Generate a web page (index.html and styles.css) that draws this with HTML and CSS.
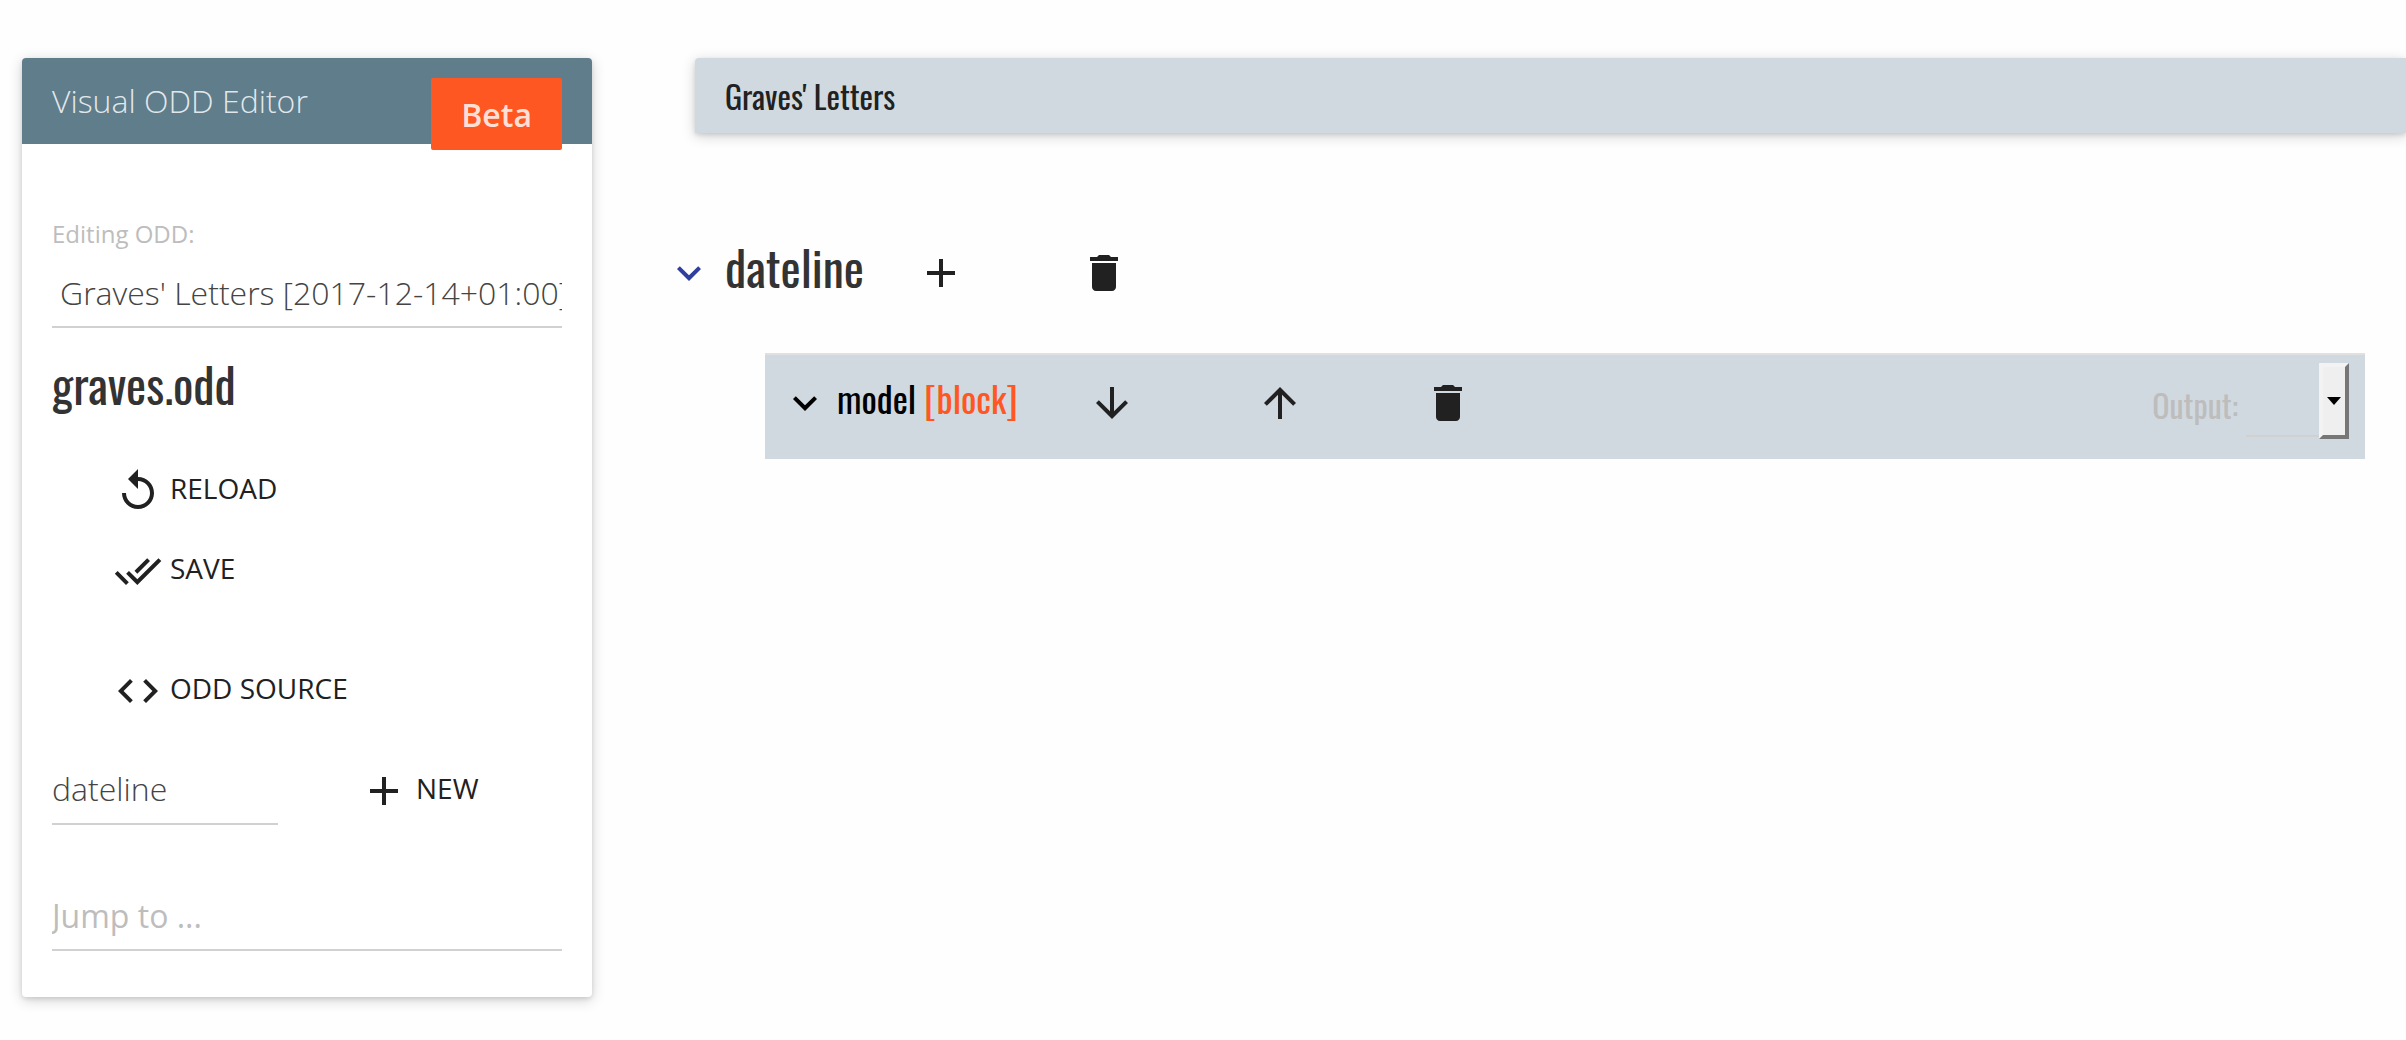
FILE: index.html
```html
<!DOCTYPE html>
<html lang="en">
<head>
<meta charset="utf-8">
<title>Visual ODD Editor</title>
<link rel="stylesheet" href="styles.css">
</head>
<body>
<svg class="sprite" aria-hidden="true">
  <symbol id="replay" viewBox="0 0 24 24"><path d="M12 5V1L7 6l5 5V7c3.31 0 6 2.69 6 6s-2.69 6-6 6-6-2.69-6-6H4c0 4.42 3.58 8 8 8s8-3.58 8-8-3.58-8-8-8z"/></symbol>
  <symbol id="done-all" viewBox="0 0 24 24"><path d="M18 7l-1.41-1.41-6.34 6.34 1.41 1.41L18 7zm4.24-1.41L11.66 16.17 7.48 12l-1.41 1.41L11.66 19l12-12-1.42-1.41zM.41 13.41L6 19l1.41-1.41L1.83 12 .41 13.41z"/></symbol>
  <symbol id="code" viewBox="0 0 24 24"><path d="M9.4 16.6L4.8 12l4.6-4.6L8 6l-6 6 6 6 1.4-1.4zm5.2 0l4.6-4.6-4.6-4.6L16 6l6 6-6 6-1.4-1.4z"/></symbol>
  <symbol id="add" viewBox="0 0 24 24"><path d="M19 13h-6v6h-2v-6H5v-2h6V5h2v6h6v2z"/></symbol>
  <symbol id="delete" viewBox="0 0 24 24"><path d="M6 19c0 1.1.9 2 2 2h8c1.100 0 2-.9 2-2V7H6v12zM19 4h-3.500l-1-1h-5l-1 1H5v2h14V4z"/></symbol>
  <symbol id="expand" viewBox="0 0 24 24"><path d="M16.590 8.590L12 13.170 7.410 8.590 6 10l6 6 6-6z"/></symbol>
  <symbol id="down" viewBox="0 0 24 24"><path d="M20 12l-1.410-1.410L13 16.170V4h-2v12.170l-5.580-5.590L4 12l8 8 8-8z"/></symbol>
  <symbol id="up" viewBox="0 0 24 24"><path d="M4 12l1.410 1.410L11 7.830V20h2V7.830l5.580 5.590L20 12l-8-8-8 8z"/></symbol>
</svg>

<aside class="panel">
  <header class="panel-header">
    <h1 class="panel-title">Visual ODD Editor</h1>
    <span class="badge">Beta</span>
  </header>
  <div class="panel-body">
    <label class="field-label" for="odd">Editing ODD:</label>
    <input class="field field-odd" id="odd" type="text" value="Graves' Letters [2017-12-14+01:00]">
    <h2 class="file-name">graves.odd</h2>
    <div class="actions">
      <button class="action" type="button"><svg class="icon"><use href="#replay"/></svg><span class="action-text">RELOAD</span></button>
      <button class="action" type="button"><svg class="icon"><use href="#done-all"/></svg><span class="action-text">SAVE</span></button>
      <button class="action action-source" type="button"><svg class="icon"><use href="#code"/></svg><span class="action-text">ODD SOURCE</span></button>
    </div>
    <div class="new-row">
      <input class="field field-ident" type="text" value="dateline" aria-label="Element name">
      <button class="action" type="button"><svg class="icon"><use href="#add"/></svg><span class="action-text">NEW</span></button>
    </div>
    <input class="field field-jump" type="text" placeholder="Jump to ..." aria-label="Jump to">
  </div>
</aside>

<main class="editor">
  <header class="title-bar">Graves' Letters</header>
  <section>
    <div class="element-row">
      <button class="icon-button toggle" type="button" aria-label="Collapse dateline"><svg class="icon"><use href="#expand"/></svg></button>
      <h2 class="element-name">dateline</h2>
      <div class="element-tools">
        <button class="icon-button" type="button" aria-label="Add model"><svg class="icon"><use href="#add"/></svg></button>
        <button class="icon-button" type="button" aria-label="Delete dateline"><svg class="icon"><use href="#delete"/></svg></button>
      </div>
    </div>
    <div class="model">
      <div class="model-head">
        <button class="icon-button model-toggle" type="button" aria-label="Collapse model"><svg class="icon"><use href="#expand"/></svg></button>
        <h3 class="model-name">model <span class="behaviour">[block]</span></h3>
        <div class="model-tools">
          <button class="icon-button" type="button" aria-label="Move down"><svg class="icon"><use href="#down"/></svg></button>
          <button class="icon-button" type="button" aria-label="Move up"><svg class="icon"><use href="#up"/></svg></button>
          <button class="icon-button" type="button" aria-label="Delete model"><svg class="icon"><use href="#delete"/></svg></button>
        </div>
      </div>
      <div class="output">
        <label class="output-label" for="output">Output:</label>
        <input class="output-field" id="output" type="text">
        <button class="output-button" type="button" aria-label="Choose output"><svg class="caret" viewBox="0 0 14 8"><path d="M0 0h14L7 8z"/></svg></button>
      </div>
    </div>
  </section>
</main>
</body>
</html>
```
FILE: styles.css
```css
* {
  box-sizing: border-box;
}

:root {
  --body: "Open Sans", "Noto Sans", sans-serif;
  --heading: Oswald, "Liberation Sans Narrow", "Liberation Sans", sans-serif;
  --ink: #212121;
  --line: #d1d1d1;
  --muted: #bdbdbd;
  --bar: #d1d9e0;
  --accent: #ff5722;
  --shadow: 0 2px 4px rgba(0, 0, 0, .1), 0 3px 14px rgba(0, 0, 0, .18);
}

body {
  margin: 0;
  padding: 58px 0 40px 22px;
  display: flex;
  align-items: flex-start;
  gap: 103px;
  background: #fefefe;
  color: var(--ink);
  font-family: var(--body);
  overflow-x: hidden;
}

h1, h2, h3 {
  margin: 0;
  font-weight: 400;
}

button, input {
  font-family: inherit;
  color: inherit;
  margin: 0;
}

.sprite {
  position: absolute;
  width: 0;
  height: 0;
}

.icon {
  display: block;
  flex: none;
  width: 48px;
  height: 48px;
  fill: currentColor;
}

.panel {
  flex: 0 0 570px;
  background: #fff;
  border-radius: 4px;
  box-shadow: var(--shadow);
}

.panel-header {
  display: flex;
  justify-content: space-between;
  align-items: flex-start;
  height: 86px;
  padding: 20px 30px 0;
  background: #607d8b;
  border-radius: 4px 4px 0 0;
  color: rgba(255, 255, 255, .84);
}

.panel-title {
  font-size: 32px;
  font-weight: 300;
  line-height: 46px;
}

.badge {
  padding: 1px 30px 0;
  background: var(--accent);
  border-radius: 2px;
  font-size: 32px;
  font-weight: 600;
  line-height: 71px;
}

.panel-body {
  padding: 72px 30px 46px;
}

.field {
  display: block;
  width: 100%;
  height: 72px;
  padding: 0;
  border: 0;
  border-bottom: 2px solid var(--line);
  background: none;
  color: #444;
  font-size: 32px;
  font-weight: 300;
}

.field::placeholder {
  color: var(--muted);
  font-weight: 400;
  opacity: 1;
}

.field-label {
  display: block;
  color: var(--muted);
  font-size: 24px;
  line-height: 36px;
}

.field-odd {
  height: 76px;
  padding: 6px 0 0 8px;
}

.file-name {
  margin: 26px 0 53px;
  color: #333;
  font-family: var(--heading);
  font-size: 48px;
  line-height: 60px;
}

.actions {
  display: flex;
  flex-direction: column;
  align-items: flex-start;
  gap: 32px;
  margin: 0 0 39px 62px;
}

.action {
  display: flex;
  align-items: flex-start;
  gap: 8px;
  padding: 0;
  border: 0;
  background: none;
  font-size: 28px;
}

.action-text {
  line-height: 42px;
}

.action-source {
  margin-top: 40px;
}

.new-row {
  display: flex;
  align-items: flex-end;
  gap: 82px;
}

.new-row .action {
  margin-bottom: 10px;
}

.field-ident {
  width: 226px;
  height: 71px;
}

.field-jump {
  height: 70px;
  margin-top: 56px;
}

.editor {
  flex: 1;
  min-width: 0;
}

.title-bar {
  height: 75px;
  padding: 0 30px;
  background: var(--bar);
  border-radius: 4px 0 0 0;
  box-shadow: var(--shadow);
  font-family: var(--heading);
  font-size: 32px;
  line-height: 75px;
}

.icon-button {
  flex: none;
  padding: 0;
  border: 0;
  background: none;
}

.element-row {
  display: flex;
  align-items: center;
  gap: 12px;
  margin: 116px 0 56px -30px;
}

.toggle {
  color: #303f9f;
}

.element-name {
  width: 180px;
  padding-bottom: 12px;
  color: #333;
  font-family: var(--heading);
  font-size: 48px;
  line-height: 36px;
}

.element-tools {
  display: flex;
  gap: 115px;
}

.model {
  display: flex;
  justify-content: space-between;
  align-items: center;
  margin: 0 41px 0 70px;
  padding: 8px 16px 20px;
  border-top: 2px solid #e0e0e0;
  background: var(--bar);
}

.model-head {
  display: flex;
  align-items: center;
  padding-top: 4px;
}

.model-toggle {
  color: #000;
}

.model-name {
  width: 259px;
  padding: 0 0 10px 8px;
  color: #000;
  font-family: var(--heading);
  font-size: 36px;
  line-height: 38px;
}

.behaviour {
  color: var(--accent);
}

.model-tools {
  display: flex;
  gap: 120px;
}

.output {
  display: flex;
  align-items: flex-end;
}

.output-label {
  padding: 0 8px 12px 0;
  color: var(--muted);
  font-family: var(--heading);
  font-size: 32px;
  line-height: 44px;
}

.output-field {
  width: 73px;
  height: 48px;
  margin-bottom: 2px;
  padding: 0;
  border: 0;
  border-bottom: 2px solid var(--line);
  background: none;
  font-size: 32px;
}

.output-button {
  display: grid;
  place-items: center;
  width: 30px;
  height: 76px;
  padding: 0;
  border: 4px solid;
  border-color: #f3f3f3 #767676 #767676 #f3f3f3;
  background: #efefef;
}

.caret {
  width: 14px;
  height: 8px;
  fill: #000;
}
```
